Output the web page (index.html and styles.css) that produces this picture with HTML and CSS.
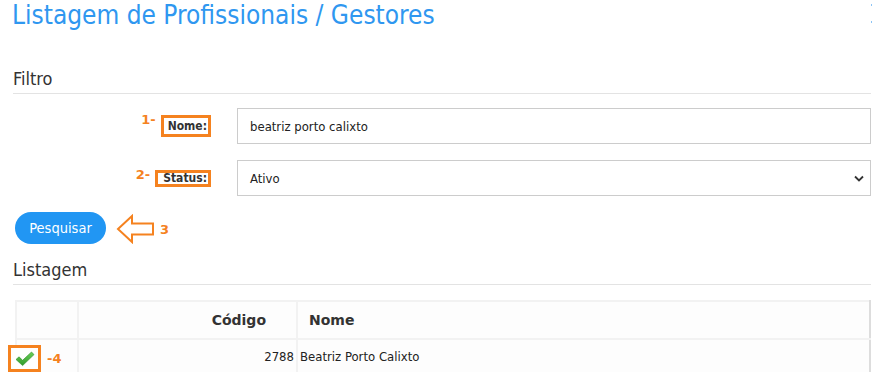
FILE: index.html
```html
<!DOCTYPE html>
<html lang="pt">
<head>
<meta charset="utf-8">
<title>Listagem de Profissionais / Gestores</title>
<link rel="stylesheet" href="styles.css">
</head>
<body>
<div class="page">
  <div class="title-row">
    <h1 class="title">Listagem de Profissionais / Gestores</h1>
    <span class="cut" aria-hidden="true"></span>
  </div>

  <h2 class="section">Filtro</h2>
  <div class="form">
    <div class="label-cell"><span class="num">1-</span><span class="lbl lbl-nome">Nome:</span></div>
    <input class="field" type="text" value="beatriz porto calixto">
    <div class="label-cell"><span class="num">2-</span><span class="lbl lbl-status">Status:</span></div>
    <div class="select">
      <span>Ativo</span>
      <svg class="chev" width="10" height="7" viewBox="0 0 10 7"><path d="M1 1.5 L5 5.5 L9 1.5" fill="none" stroke="#333" stroke-width="1.8"/></svg>
    </div>
  </div>

  <div class="actions">
    <button class="btn">Pesquisar</button>
    <svg class="arrow" width="40" height="30" viewBox="0 0 40 30"><path d="M2 15 L16 2 L16 9.5 L37 9.5 L37 20.5 L16 20.5 L16 28 Z" fill="none" stroke="#f5821f" stroke-width="2" stroke-linejoin="miter"/></svg>
    <span class="num big">3</span>
  </div>

  <h2 class="section list">Listagem</h2>
  <table class="grid">
    <thead>
      <tr><th class="c1"></th><th class="c2">Código</th><th class="c3">Nome</th></tr>
    </thead>
    <tbody>
      <tr>
        <td class="c1">
          <span class="mark">
            <span class="check-box"><svg width="20" height="16" viewBox="0 0 20 16"><defs><linearGradient id="g" x1="0" y1="0" x2="0" y2="1"><stop offset="0" stop-color="#6cd05a"/><stop offset="1" stop-color="#2e9a2a"/></linearGradient></defs><path d="M1 8.5 L4 5.8 L7.6 9.3 L16.5 1 L19 3.6 L7.6 14.6 Z" fill="url(#g)" stroke="#2a8a25" stroke-width="0.6"/></svg></span>
            <span class="num">-4</span>
          </span>
        </td>
        <td class="c2 code">2788</td>
        <td class="c3">Beatriz Porto Calixto</td>
      </tr>
    </tbody>
  </table>
</div>
</body>
</html>
```
FILE: styles.css
```css
* { box-sizing: border-box; }
html, body { margin: 0; padding: 0; background: #fff; }
body {
  font-family: "DejaVu Sans Condensed", "DejaVu Sans", Verdana, sans-serif;
  color: #333;
  overflow: hidden;
}
.page {
  width: 873px;
  height: 372px;
  padding: 0 2px 0 13px;
  overflow: hidden;
}
.title-row {
  display: flex;
  justify-content: space-between;
  align-items: flex-start;
}
.title {
  margin: 0 0 0 -1px;
  font-weight: normal;
  font-size: 26px;
  line-height: 30px;
  color: #2f97f0;
}
.cut {
  width: 1px;
  height: 2px;
  margin-top: 4px;
  margin-right: -1px;
  background: #8cc4f5;
  box-shadow: 0 17px 0 #8cc4f5;
}
.section {
  margin: 38px 0 0 0;
  font-size: 18px;
  font-weight: normal;
  line-height: 22px;
  padding-bottom: 3px;
  border-bottom: 1px solid #e3e3e3;
  color: #333;
}
.section.list { margin-top: 15px; }
.form {
  display: grid;
  grid-template-columns: 198px 1fr;
  column-gap: 26px;
  row-gap: 16px;
  margin-top: 14px;
  align-items: center;
}
.label-cell {
  display: flex;
  justify-content: flex-end;
  align-items: flex-start;
  gap: 5px;
}
.num {
  color: #f5821f;
  font-weight: bold;
  font-size: 13px;
  font-family: "DejaVu Sans", Verdana, sans-serif;
}
.label-cell .num { margin-top: -3px; }
.lbl {
  font-weight: bold;
  font-size: 12px;
  color: #333;
  border: 3px solid #f5821f;
  padding: 0 1px 0 4px;
}
.lbl-nome { line-height: 16px; }
.lbl-status { line-height: 11px; padding-left: 5px; }
.field, .select {
  height: 36px;
  border: 1px solid #ccc;
  background: #fff;
  font-family: "DejaVu Sans Condensed", "DejaVu Sans", sans-serif;
  font-size: 13px;
  color: #222;
  padding: 0 12px;
  width: 100%;
}
.field { outline: none; }
.select {
  display: flex;
  align-items: center;
  justify-content: space-between;
  padding-right: 6px;
}
.actions {
  display: flex;
  align-items: center;
  margin-top: 15px;
  padding-left: 2px;
}
.btn {
  height: 32px;
  width: 91px;
  border: 0;
  border-radius: 16px;
  background: #2196f3;
  color: #fff;
  font-family: "DejaVu Sans Condensed", "DejaVu Sans", sans-serif;
  font-size: 14.5px;
  padding: 0;
}
.arrow { margin-left: 10px; margin-top: 3px; }
.num.big { margin-left: 4px; margin-top: 4px; }
.grid {
  margin-top: 15px;
  margin-left: 2px;
  width: 856px;
  border-collapse: collapse;
  background: #fdfdfd;
}
.grid th, .grid td {
  border: 2px solid #f2f2f2;
  font-size: 14px;
}
.grid th:last-child, .grid td:last-child { border-right: 2px solid #ddd; }
.grid th {
  height: 38px;
  font-weight: bold;
  color: #333;
  font-family: "DejaVu Sans", Verdana, sans-serif;
  font-size: 14px;
}
.grid td {
  height: 40px;
  color: #222;
  font-size: 13px;
  padding: 9px 2px 0;
  vertical-align: top;
}
.c1 { width: 62px; position: relative; }
.c2 { width: 219px; text-align: right; padding-right: 30px !important; }
td.c2 { padding-right: 2px !important; }
.c3 { text-align: left; padding-left: 11px !important; }
td.c3 { padding-left: 2px !important; }
.mark {
  position: absolute;
  left: -9px;
  top: 5px;
  display: flex;
  align-items: center;
  gap: 6px;
}
.check-box {
  width: 33px;
  height: 27px;
  border: 3px solid #f5821f;
  display: flex;
  align-items: center;
  justify-content: center;
  background: #fff;
}
```
